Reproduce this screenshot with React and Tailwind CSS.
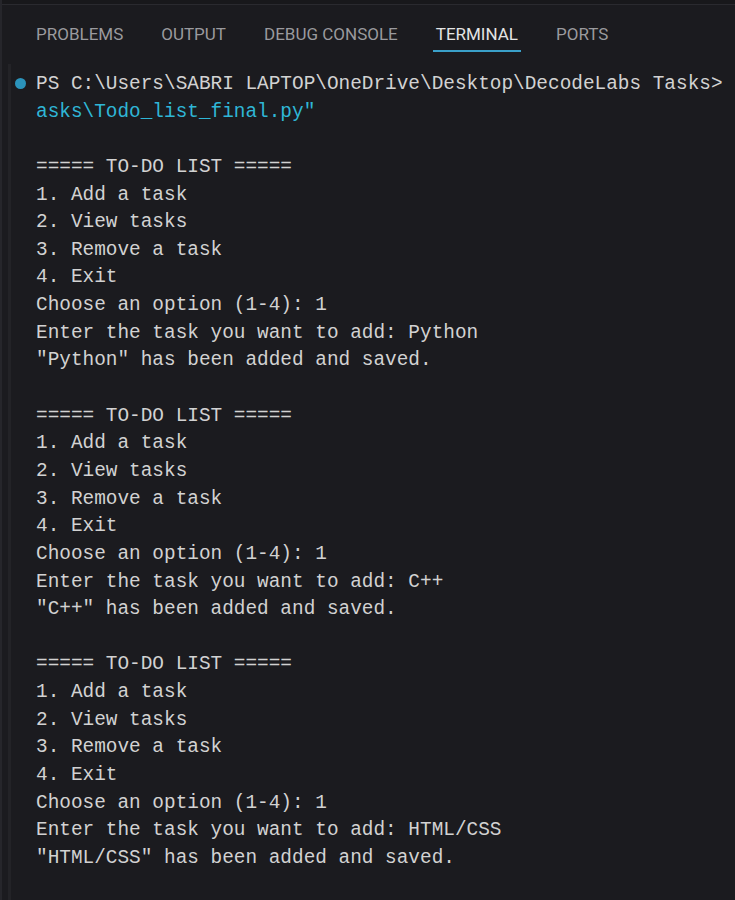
import React from 'react';

const tabs = ['PROBLEMS', 'OUTPUT', 'DEBUG CONSOLE', 'TERMINAL', 'PORTS'];

// one block per menu round in the terminal session
const rounds = [
  { task: 'Python' },
  { task: 'C++' },
  { task: 'HTML/CSS' },
];

function buildLines() {
  const lines = [
    { text: 'PS C:\\Users\\SABRI LAPTOP\\OneDrive\\Desktop\\DecodeLabs Tasks>', prompt: true },
    { text: 'asks\\Todo_list_final.py"', cyan: true },
  ];
  rounds.forEach((r) => {
    lines.push({ text: '' });
    lines.push({ text: '===== TO-DO LIST =====' });
    lines.push({ text: '1. Add a task' });
    lines.push({ text: '2. View tasks' });
    lines.push({ text: '3. Remove a task' });
    lines.push({ text: '4. Exit' });
    lines.push({ text: 'Choose an option (1-4): 1' });
    lines.push({ text: `Enter the task you want to add: ${r.task}` });
    lines.push({ text: `"${r.task}" has been added and saved.` });
  });
  return lines;
}

export default function App() {
  const lines = buildLines();

  return (
    <div className="w-[735px] h-[900px] bg-[#1b1b1f] flex overflow-hidden">
      <div className="w-[2px] bg-[#26262b]" />
      <div className="flex-1 flex flex-col">
        <div className="h-[4px] bg-[#18181b]" />
        <div className="h-[1px] bg-[#2a2a2f]" />

        {/* panel tabs */}
        <div className="h-[59px] flex items-start pl-[34px] pt-[19px] gap-[38px] font-['Roboto',sans-serif] text-[17px]">
          {tabs.map((t) => (
            <div key={t} className="flex flex-col">
              <span className={`leading-[20px] whitespace-nowrap ${t === 'TERMINAL' ? 'text-[#e4e4e4]' : 'text-[#9a9a9e]'}`}>
                {t}
              </span>
              {t === 'TERMINAL' && <div className="mt-[6px] mx-[-3px] h-[2px] bg-[#3aa0c9]" />}
            </div>
          ))}
        </div>

        {/* terminal output */}
        <div className="flex flex-1">
          <div className="w-[6px]" />
          <div className="w-[3px] bg-[#232327]" />
          <div className="flex flex-col pt-[7px] font-['Liberation_Mono',monospace] text-[19.4px] leading-[27.65px] text-[#d2d2d2]">
            {lines.map((l, i) => (
              <div key={i} className="flex h-[27.65px] items-center">
                <div className="w-[25px] flex items-center">
                  {l.prompt && <div className="ml-[4px] -mt-[3px] w-[11px] h-[11px] rounded-full bg-[#2b93bb]" />}
                </div>
                <span className={`whitespace-pre ${l.cyan ? 'text-[#2fb6d6]' : ''}`}>{l.text}</span>
              </div>
            ))}
          </div>
        </div>
      </div>
    </div>
  );
}
